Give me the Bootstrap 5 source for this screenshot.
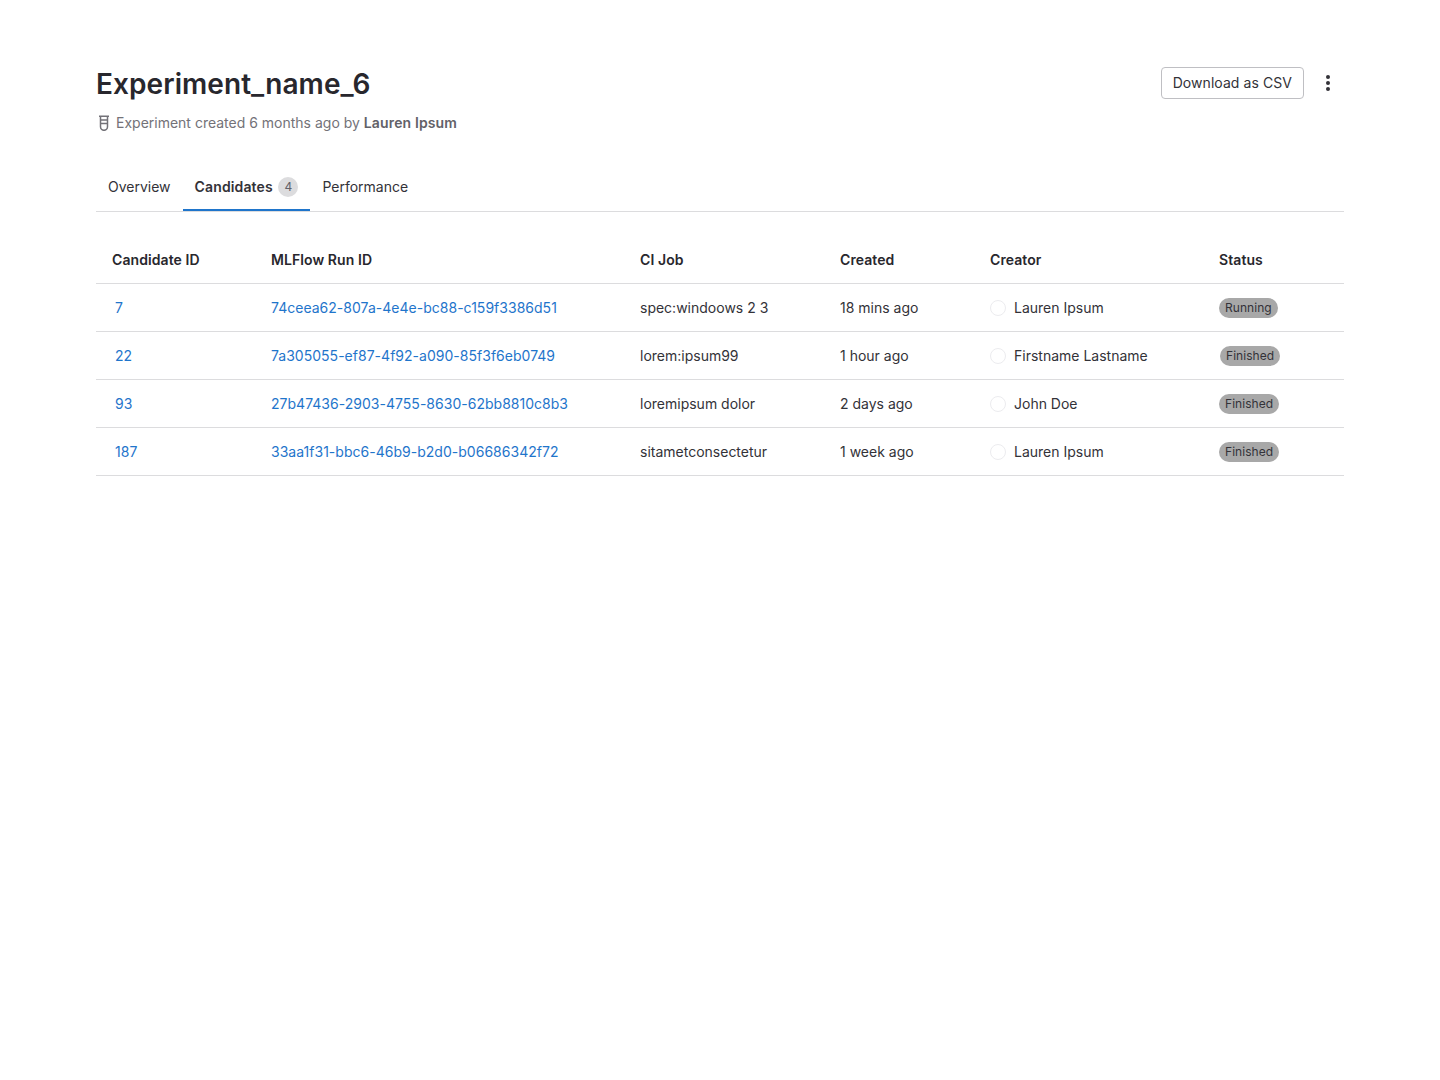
<!DOCTYPE html>
<html lang="en">
<head>
<meta charset="utf-8">
<title>Experiment_name_6</title>
<link href="https://cdn.jsdelivr.net/npm/bootstrap@5.3.0/dist/css/bootstrap.min.css" rel="stylesheet">
<style>
body { font-family: Inter, "Liberation Sans", sans-serif; font-size: 14px; color: #333238; background: #fff; }
.page-wrap { padding: 64px 96px 0; }
.title-block { padding-top: 2px; }
.page-title { font-size: 28px; font-weight: 600; line-height: 36px; color: #28272d; margin: 0; letter-spacing: 0.07px; }
.meta-line { color: #737278; line-height: 20px; margin-top: 11px; gap: 4px; }
.meta-line strong { color: #626168; font-weight: 600; letter-spacing: 0.13px; }
.meta-ico { width: 16px; height: 16px; color: #737278; }
.csv-btn { font-size: 14px; line-height: 20px; padding: 5px 11px; border: 1px solid #bfbfc3; border-radius: 4px; color: #333238; background: #fff; letter-spacing: 0.07px; }
.more-btn { width: 32px; height: 32px; margin-left: 8px; border: 0; background: none; padding: 0; color: #333238; }
.head-actions { margin-top: 3px; }
.tab-bar { margin-top: 30px; border-bottom: 1px solid #dcdcde; gap: 0; }
.tab-bar .nav-link { color: #333238; padding: 14px 12px 14px; line-height: 20px; height: 48px; border-radius: 0; }
.tab-bar .nav-link.active-tab { font-weight: 600; color: #333238; box-shadow: inset 0 -2px 0 #1f75cb; letter-spacing: 0.13px; }
.count-pill { display: inline-block; width: 20px; height: 20px; border-radius: 50%; background: #dcdcde; color: #626168; font-size: 12px; line-height: 20px; text-align: center; font-weight: 400; margin-left: 2px; vertical-align: top; letter-spacing: 0; }
.runs-table { margin: 24px 0 0; table-layout: fixed; width: 100%; color: #333238; }
.runs-table th, .runs-table td { padding: 0 0 0 16px; vertical-align: middle; border-bottom: 1px solid #dcdcde; height: 48px; color: #333238; }
.runs-table th { font-weight: 600; color: #28272d; height: 47px; letter-spacing: 0.08px; }
.runs-table a { color: #1f75cb; text-decoration: none; letter-spacing: 0.02px; }
.c-id { width: 159px; } .c-run { width: 369px; } .c-job { width: 200px; } .c-when { width: 150px; } .c-who { width: 229px; }
.id-link { padding-left: 3px; }
.avatar-ring { width: 16px; height: 16px; border-radius: 50%; border: 1px solid #ececef; background: #fff; margin: 2px 8px 0 0; flex: none; }
.state-pill { display: inline-block; background: #a8a8a8; color: #333238; font-size: 12px; line-height: 20px; height: 20px; padding: 0 6px; border-radius: 10px; letter-spacing: 0.05px; }
.state-shift { margin-left: 1px; }
</style>
</head>
<body>
<main class="page-wrap">
  <div class="d-flex justify-content-between align-items-start">
    <div class="title-block">
      <h1 class="page-title">Experiment_name_6</h1>
      <div class="meta-line d-flex align-items-center">
        <svg class="meta-ico" viewBox="0 0 16 16" fill="none" stroke="currentColor" stroke-width="1.5" aria-hidden="true"><path d="M3 1.25h10M4.5 1.25v10.6a3.5 3.5 0 0 0 7 0V1.25M4.5 5h7M4.5 8.5h7"/></svg>
        <span>Experiment created 6 months ago by <strong>Lauren Ipsum</strong></span>
      </div>
    </div>
    <div class="head-actions d-flex align-items-center">
      <button type="button" class="btn csv-btn">Download as CSV</button>
      <button type="button" class="more-btn d-flex align-items-center justify-content-center" aria-label="More actions">
        <svg width="16" height="16" viewBox="0 0 16 16" fill="currentColor" aria-hidden="true"><circle cx="8" cy="2" r="2"/><circle cx="8" cy="8" r="2"/><circle cx="8" cy="14" r="2"/></svg>
      </button>
    </div>
  </div>

  <ul class="nav tab-bar">
    <li class="nav-item"><a class="nav-link" href="#">Overview</a></li>
    <li class="nav-item"><a class="nav-link active-tab" href="#">Candidates <span class="count-pill">4</span></a></li>
    <li class="nav-item"><a class="nav-link" href="#">Performance</a></li>
  </ul>

  <table class="table runs-table">
    <colgroup><col class="c-id"><col class="c-run"><col class="c-job"><col class="c-when"><col class="c-who"><col></colgroup>
    <thead>
      <tr><th>Candidate ID</th><th>MLFlow Run ID</th><th>CI Job</th><th>Created</th><th>Creator</th><th>Status</th></tr>
    </thead>
    <tbody>
      <tr>
        <td><a class="id-link" href="#">7</a></td>
        <td><a href="#">74ceea62-807a-4e4e-bc88-c159f3386d51</a></td>
        <td>spec:windoows 2 3</td><td>18 mins ago</td>
        <td><div class="d-flex align-items-center"><span class="avatar-ring"></span>Lauren Ipsum</div></td>
        <td><span class="state-pill">Running</span></td>
      </tr>
      <tr>
        <td><a class="id-link" href="#">22</a></td>
        <td><a href="#">7a305055-ef87-4f92-a090-85f3f6eb0749</a></td>
        <td>lorem:ipsum99</td><td>1 hour ago</td>
        <td><div class="d-flex align-items-center"><span class="avatar-ring"></span>Firstname Lastname</div></td>
        <td><span class="state-pill state-shift">Finished</span></td>
      </tr>
      <tr>
        <td><a class="id-link" href="#">93</a></td>
        <td><a href="#">27b47436-2903-4755-8630-62bb8810c8b3</a></td>
        <td>loremipsum dolor</td><td>2 days ago</td>
        <td><div class="d-flex align-items-center"><span class="avatar-ring"></span>John Doe</div></td>
        <td><span class="state-pill">Finished</span></td>
      </tr>
      <tr>
        <td><a class="id-link" href="#">187</a></td>
        <td><a href="#">33aa1f31-bbc6-46b9-b2d0-b06686342f72</a></td>
        <td>sitametconsectetur</td><td>1 week ago</td>
        <td><div class="d-flex align-items-center"><span class="avatar-ring"></span>Lauren Ipsum</div></td>
        <td><span class="state-pill">Finished</span></td>
      </tr>
    </tbody>
  </table>
</main>
<script src="https://cdn.jsdelivr.net/npm/bootstrap@5.3.0/dist/js/bootstrap.bundle.min.js"></script>
</body>
</html>
